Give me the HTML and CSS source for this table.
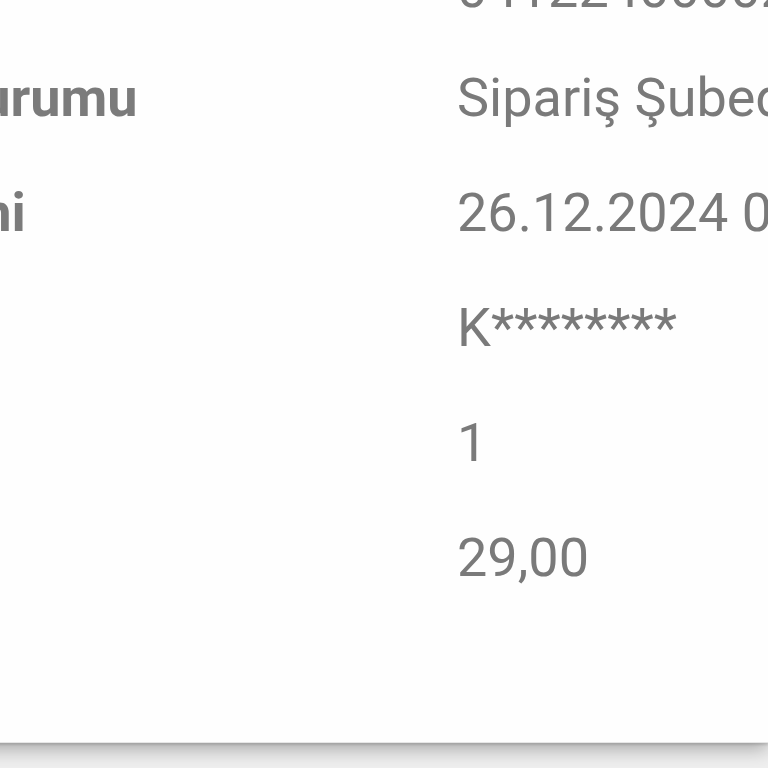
FILE: index.html
```html
<!DOCTYPE html>
<html lang="tr">
<head>
<meta charset="utf-8">
<title>Sipariş Detayı</title>
<link rel="stylesheet" href="styles.css">
</head>
<body>
<main class="card">
  <div class="row row-first">
    <div class="label">Fiş No</div>
    <div class="value">0412240000215</div>
  </div>
  <div class="row">
    <div class="label">Sipariş Durumu</div>
    <div class="value">Sipariş Şubede Hazırlanıyor</div>
  </div>
  <div class="row">
    <div class="label">Ön Zamani</div>
    <div class="value">26.12.2024 09:41</div>
  </div>
  <div class="row">
    <div class="label">Ad</div>
    <div class="value">K********</div>
  </div>
  <div class="row">
    <div class="label">Adet</div>
    <div class="value">1</div>
  </div>
  <div class="row">
    <div class="label">Tutar</div>
    <div class="value">29,00</div>
  </div>
</main>
</body>
</html>
```
FILE: styles.css
```css
html, body {
  margin: 0;
  padding: 0;
  height: 100%;
  overflow: hidden;
}
body {
  background: #efefef;
  font-family: Roboto, "Noto Sans", sans-serif;
}
.card {
  background: #fefefe;
  margin: -69px 0 0 -237px;
  width: calc(100% + 237px);
  height: 811px;
  border-bottom: 1px solid #e6e6e6;
  box-shadow: 0 2px 2px rgba(0, 0, 0, 0.12), 0 6px 18px rgba(0, 0, 0, 0.3);
  display: flex;
  flex-direction: column;
}
.row {
  display: grid;
  grid-template-columns: 694px 1fr;
  height: 115px;
  line-height: 115px;
  font-size: 54px;
  white-space: nowrap;
}
.row-first {
  height: 109px;
}
.label {
  font-weight: 700;
  color: #7b7b7b;
  overflow: hidden;
}
.value {
  color: #7a7a7a;
  overflow: hidden;
}
```
